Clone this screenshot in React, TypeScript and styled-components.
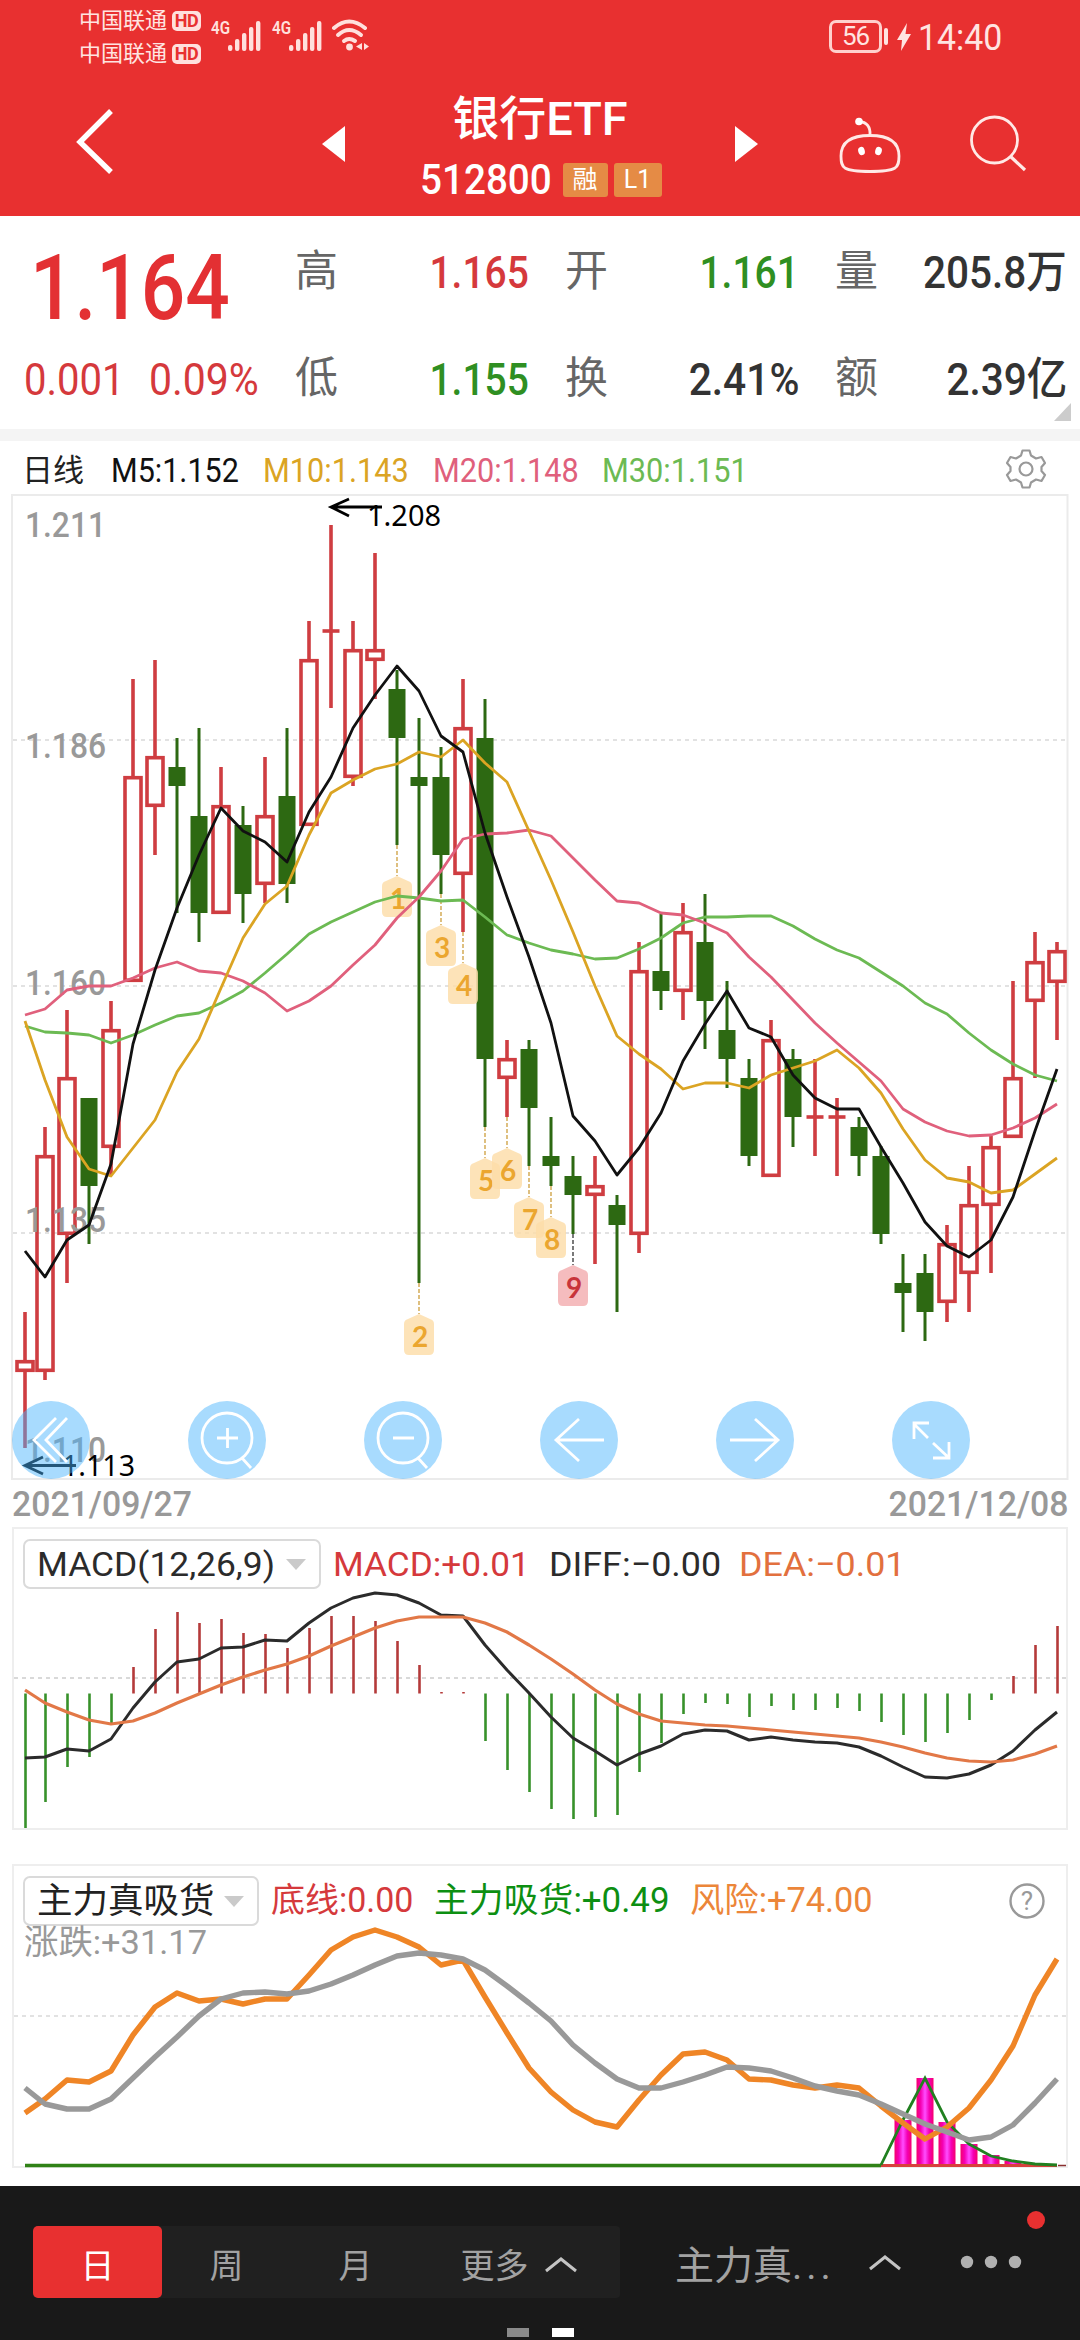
import React from "react";
import styled, { createGlobalStyle } from "styled-components";

const Global = createGlobalStyle`
  * { box-sizing: border-box; }
  body { margin: 0; background: #fff; }
`;

const FONT = `Roboto, "Noto Sans CJK SC", sans-serif`;
const RED = "#d5393c";
const GREEN = "#2f8f22";
const UP = "#cf3d41";
const DOWN = "#2d6912";

const Screen = styled.div`
  width: 1080px;
  height: 2340px;
  display: flex;
  flex-direction: column;
  font-family: ${FONT};
  background: #fff;
  overflow: hidden;
`;

/* ---------- text ---------- */

const Slot = styled.span<{ $w?: number; $right?: boolean }>`
  display: flex;
  flex: none;
  width: ${(p) => (p.$w ? `${p.$w}px` : "auto")};
  justify-content: ${(p) => (p.$right ? "flex-end" : "flex-start")};
  white-space: nowrap;
`;

const Glyphs = styled.span<{ $size: number; $color?: string; $weight?: number; $k?: number; $right?: boolean }>`
  display: block;
  font-size: ${(p) => p.$size}px;
  line-height: 1.2;
  font-weight: ${(p) => p.$weight ?? 400};
  color: ${(p) => p.$color ?? "inherit"};
  transform: scaleX(${(p) => p.$k ?? 1});
  transform-origin: ${(p) => (p.$right ? "right" : "left")} center;
`;

type TextProps = {
  size: number;
  color?: string;
  weight?: number;
  k?: number;
  w?: number;
  right?: boolean;
  children: React.ReactNode;
};

const Text = ({ size, color, weight, k, w, right, children }: TextProps) => (
  <Slot $w={w} $right={right}>
    <Glyphs $size={size} $color={color} $weight={weight} $k={k} $right={right}>
      {children}
    </Glyphs>
  </Slot>
);

/* ---------- header ---------- */

const Header = styled.header`
  height: 216px;
  flex: none;
  background: #e83030;
  color: #fff;
`;

const StatusBar = styled.div`
  height: 73px;
  padding: 4px 76px 0 79px;
  display: flex;
  justify-content: space-between;
  color: #ffe4e1;
`;

const StatusGroup = styled.div`
  display: flex;
  align-items: flex-start;
`;

const Carriers = styled.div`
  display: flex;
  flex-direction: column;
`;

const Carrier = styled.div`
  display: flex;
  align-items: center;
  height: 33px;
  gap: 5px;
  font-size: 22px;
  line-height: 33px;
`;

const HdBadge = styled.span`
  width: 29px;
  height: 20px;
  border-radius: 5px;
  background: #ffe0dd;
  color: #e83030;
  font-size: 18px;
  font-weight: 700;
  line-height: 20px;
  text-align: center;
  letter-spacing: -0.5px;
`;

const StatusIcons = styled.svg`
  margin: 10px 0 0 9px;
  width: 164px;
  height: 42px;
`;

const Battery = styled.div`
  width: 53px;
  height: 33px;
  margin-top: 16px;
  border: 3px solid #ffd0cc;
  border-radius: 7px;
  font-size: 26px;
  line-height: 27px;
  text-align: center;
  letter-spacing: -1px;
`;

const BatteryTail = styled.svg`
  width: 34px;
  height: 40px;
  margin: 12px 0 0 2px;
`;

const Clock = styled.div`
  margin-top: 13px;
  width: 86px;
`;

const TitleBar = styled.div`
  height: 143px;
  display: grid;
  grid-template-columns: 322px 436px 322px;
`;

const TitleSide = styled.div`
  display: flex;
  justify-content: space-between;
`;

const TitleIcon = styled.svg`
  width: 322px;
  height: 143px;
`;

const PageArrow = styled.svg`
  width: 24px;
  height: 143px;
`;

const TitleCenter = styled.div`
  display: flex;
  flex-direction: column;
  align-items: center;
  padding-top: 11px;
`;

const StockName = styled.div`
  font-size: 47px;
  line-height: 70px;
  font-weight: 500;
`;

const CodeRow = styled.div`
  display: flex;
  align-items: center;
  gap: 6px;
  height: 52px;
  margin-left: 1px;
`;

const Tag = styled.span<{ $w: number }>`
  width: ${(p) => p.$w}px;
  height: 34px;
  border-radius: 3px;
  background: #e58b45;
  font-size: 25px;
  line-height: 33px;
  text-align: center;
`;

/* ---------- quote ---------- */

const Quote = styled.section`
  flex: none;
  height: 225px;
  border-bottom: 12px solid #f4f4f4;
  display: grid;
  grid-template-columns: 270px 270px 270px 257px;
  position: relative;
`;

const PriceBox = styled.div`
  display: grid;
  grid-template-rows: 107px 106px;
`;

const PriceMain = styled.div`
  padding: 19px 0 0 30px;
`;

const PriceChange = styled.div`
  display: flex;
  padding: 30px 0 0 24px;
`;

const QuoteCol = styled.div`
  display: grid;
  grid-template-rows: 107px 106px;
`;

const QuoteCell = styled.div`
  display: flex;
  justify-content: space-between;
  padding: 30px 11px 0 25px;
`;

const LastCol = styled(QuoteCol)`
  ${QuoteCell} { padding-right: 0; }
`;

const Corner = styled.i`
  position: absolute;
  right: 9px;
  bottom: 8px;
  border-style: solid;
  border-width: 0 0 18px 17px;
  border-color: transparent transparent #ccc transparent;
`;

/* ---------- charts ---------- */

const Legend = styled.div`
  height: 53px;
  flex: none;
  display: flex;
  align-items: center;
  padding: 6px 33px 0 22px;
`;

const Gear = styled.svg`
  width: 42px;
  height: 42px;
  margin: -3px 0 0 auto;
`;

const ChartWrap = styled.section`
  position: relative;
  flex: none;
  height: 987px;
`;

const Plot = styled.svg<{ $w: number; $h: number }>`
  display: block;
  overflow: visible;
  width: ${(p) => p.$w}px;
  height: ${(p) => p.$h}px;
`;

const Tools = styled.div`
  position: absolute;
  left: 12px;
  bottom: 2px;
  display: flex;
  gap: 98px;
`;

const Tool = styled.button`
  width: 78px;
  height: 78px;
  padding: 0;
  border: 0;
  border-radius: 50%;
  background: rgba(74, 180, 253, 0.48);
  svg { display: block; width: 78px; height: 78px; }
`;

const Dates = styled.div`
  height: 46px;
  flex: none;
  display: flex;
  justify-content: space-between;
  padding: 3px 12px 0 12px;
`;

const Panel = styled.section<{ $h: number; $mt?: number }>`
  flex: none;
  height: ${(p) => p.$h}px;
  margin: ${(p) => p.$mt ?? 0}px 12px 0 12px;
  border: 2px solid #eee;
`;

const PanelHead = styled.div`
  height: 60px;
  display: flex;
  align-items: center;
  padding: 10px 20px 0 9px;
`;

const Select = styled.div<{ $w: number }>`
  width: ${(p) => p.$w}px;
  height: 50px;
  flex: none;
  margin-right: 12px;
  padding: 0 13px 0 12px;
  border: 2px solid #dadada;
  border-radius: 7px;
  display: flex;
  align-items: center;
  justify-content: space-between;
`;

const Caret = styled.i`
  border-style: solid;
  border-width: 11px 10px 0 10px;
  border-color: #cacaca transparent transparent transparent;
`;

const Help = styled.svg`
  width: 38px;
  height: 38px;
  margin-left: auto;
`;

/* ---------- bottom bar ---------- */

const Footer = styled.footer`
  margin-top: auto;
  height: 154px;
  flex: none;
  background: #191919;
  color: #a2a2a2;
  padding: 40px 0 0 33px;
  position: relative;
`;

const FooterRow = styled.div`
  display: flex;
  align-items: center;
  height: 72px;
`;

const Segments = styled.div`
  display: flex;
  width: 587px;
  height: 72px;
  background: #202020;
  border-radius: 4px;
  margin-right: 55px;
`;

const Segment = styled.div<{ $active?: boolean; $w?: number }>`
  width: ${(p) => p.$w ?? 129}px;
  display: flex;
  align-items: center;
  justify-content: center;
  gap: 15px;
  padding-top: 3px;
  border-radius: 5px;
  font-size: 34px;
  background: ${(p) => (p.$active ? "#e83030" : "transparent")};
  color: ${(p) => (p.$active ? "#fff" : "inherit")};
`;

const Picker = styled.div`
  width: 227px;
  display: flex;
  align-items: center;
  justify-content: space-between;
  font-size: 39px;
`;

const Ellipsis = styled.span`
  letter-spacing: 4px;
`;

const Chevron = styled.svg`
  width: 34px;
  height: 18px;
`;

const More = styled.svg`
  width: 64px;
  height: 16px;
  margin-left: 57px;
`;

const Unread = styled.i`
  position: absolute;
  left: 1027px;
  top: 25px;
  width: 18px;
  height: 18px;
  border-radius: 50%;
  background: #e83030;
`;

const Pages = styled.div`
  display: flex;
  gap: 23px;
  margin: 30px 0 0 474px;
`;

const Page = styled.i<{ $on?: boolean }>`
  width: 22px;
  height: 9px;
  background: ${(p) => (p.$on ? "#fff" : "#8a8a8a")};
`;

/* ---------- data ---------- */

const px = (i: number) => (i === 0 ? 25 : 23 + 22 * i);

type Candle = [number, number, number, number, "r" | "g"];

const candles: Candle[] = [
  [1312, 1360, 1372, 1448, "r"], [1127, 1155, 1372, 1380, "r"], [1010, 1077, 1235, 1283, "r"],
  [1098, 1098, 1186, 1244, "g"], [1001, 1029, 1148, 1175, "r"], [679, 776, 982, 982, "r"],
  [660, 756, 807, 855, "r"], [738, 767, 786, 913, "g"], [728, 816, 913, 942, "g"],
  [767, 805, 914, 914, "r"], [806, 825, 894, 923, "g"], [757, 815, 885, 903, "r"],
  [728, 796, 884, 903, "g"], [621, 659, 826, 826, "r"], [525, 631, 631, 708, "r"],
  [621, 649, 778, 786, "r"], [553, 649, 661, 699, "r"], [670, 689, 738, 845, "g"],
  [718, 777, 786, 1283, "g"], [747, 777, 855, 894, "g"], [679, 727, 875, 932, "r"],
  [699, 738, 1059, 1127, "g"], [1040, 1058, 1079, 1117, "r"], [1040, 1049, 1108, 1166, "g"],
  [1117, 1156, 1166, 1186, "g"], [1156, 1176, 1195, 1234, "g"], [1156, 1185, 1196, 1264, "r"],
  [1195, 1205, 1225, 1312, "g"], [942, 970, 1235, 1253, "r"], [914, 971, 991, 1010, "g"],
  [903, 931, 992, 1020, "r"], [894, 942, 1001, 1049, "g"], [981, 1030, 1059, 1088, "g"],
  [1059, 1078, 1156, 1166, "g"], [1020, 1039, 1177, 1177, "r"], [1049, 1059, 1117, 1147, "g"],
  [1059, 1117, 1117, 1156, "r"], [1098, 1117, 1117, 1176, "r"], [1117, 1127, 1156, 1176, "g"],
  [1146, 1156, 1234, 1244, "g"], [1254, 1283, 1293, 1332, "g"], [1254, 1273, 1312, 1341, "g"],
  [1225, 1243, 1303, 1322, "r"], [1166, 1204, 1274, 1312, "r"], [1136, 1146, 1206, 1273, "r"],
  [981, 1077, 1138, 1138, "r"], [932, 961, 1002, 1078, "r"], [942, 950, 983, 1040, "r"],
];

const m5 = [1251, 1277, 1240, 1225, 1164, 1044, 970, 908, 855, 808, 831, 842, 862, 812, 777, 728, 695, 666, 691, 736, 752, 833, 897, 957, 1023, 1116, 1141, 1175, 1148, 1113, 1061, 1024, 991, 1028, 1037, 1075, 1098, 1109, 1109, 1147, 1183, 1222, 1246, 1257, 1240, 1197, 1131, 1069];
const m10 = [1021, 1080, 1137, 1169, 1176, 1148, 1120, 1072, 1039, 988, 938, 904, 886, 835, 793, 780, 769, 764, 752, 757, 740, 763, 782, 831, 880, 932, 986, 1036, 1054, 1069, 1089, 1083, 1083, 1088, 1075, 1068, 1061, 1050, 1068, 1093, 1129, 1160, 1178, 1182, 1193, 1190, 1174, 1158];
const m20 = [1015, 1009, 990, 986, 986, 978, 968, 962, 971, 973, 981, 993, 1011, 1001, 986, 965, 945, 918, 897, 871, 839, 834, 833, 830, 836, 858, 880, 901, 903, 913, 915, 923, 933, 957, 977, 1000, 1023, 1043, 1062, 1081, 1109, 1122, 1131, 1136, 1135, 1128, 1118, 1104];
const m30 = [1026, 1032, 1033, 1035, 1043, 1035, 1025, 1016, 1013, 1003, 991, 973, 954, 934, 922, 912, 902, 896, 898, 901, 900, 917, 935, 943, 950, 954, 959, 958, 949, 938, 923, 917, 917, 916, 916, 926, 939, 950, 958, 972, 986, 1003, 1014, 1033, 1050, 1064, 1075, 1081];

const macd = [1828, 1802, 1767, 1757, 1723, 1667, 1629, 1612, 1623, 1619, 1633, 1634, 1648, 1628, 1616, 1616, 1621, 1641, 1665, 1692, 1692, 1741, 1770, 1792, 1809, 1819, 1817, 1815, 1772, 1743, 1714, 1703, 1704, 1717, 1706, 1710, 1710, 1708, 1711, 1722, 1735, 1742, 1733, 1720, 1700, 1676, 1645, 1626];
const diff = [1758, 1757, 1749, 1751, 1739, 1708, 1682, 1662, 1659, 1648, 1647, 1640, 1641, 1623, 1608, 1598, 1593, 1595, 1603, 1615, 1616, 1645, 1670, 1693, 1717, 1738, 1751, 1765, 1754, 1746, 1734, 1730, 1731, 1740, 1737, 1740, 1742, 1743, 1747, 1756, 1767, 1777, 1778, 1774, 1765, 1751, 1730, 1712];
const dea = [1690, 1703, 1712, 1720, 1724, 1721, 1713, 1703, 1694, 1685, 1677, 1670, 1664, 1656, 1646, 1637, 1628, 1621, 1617, 1617, 1617, 1623, 1632, 1645, 1659, 1674, 1690, 1704, 1714, 1721, 1723, 1725, 1726, 1728, 1730, 1732, 1734, 1736, 1738, 1742, 1747, 1753, 1758, 1761, 1762, 1760, 1754, 1746];

const risk = [2113, 2099, 2080, 2082, 2071, 2035, 2007, 1993, 2001, 1999, 2004, 1999, 1999, 1975, 1950, 1937, 1930, 1937, 1947, 1965, 1960, 1997, 2033, 2068, 2092, 2110, 2122, 2127, 2100, 2075, 2054, 2052, 2060, 2079, 2080, 2085, 2088, 2085, 2088, 2106, 2123, 2139, 2127, 2108, 2080, 2046, 1995, 1959];
const trend = [2088, 2104, 2109, 2109, 2099, 2078, 2057, 2037, 2016, 1999, 1993, 1992, 1994, 1991, 1984, 1975, 1965, 1956, 1953, 1955, 1959, 1970, 1986, 2003, 2021, 2045, 2063, 2079, 2088, 2088, 2082, 2075, 2067, 2068, 2071, 2078, 2086, 2091, 2095, 2104, 2114, 2124, 2132, 2140, 2137, 2125, 2103, 2079];
const inflow: [number, number][] = [[40, 2120], [41, 2078], [42, 2122], [43, 2144], [44, 2155], [45, 2161], [46, 2164]];

const marks: [number, number][] = [[1, 17], [2, 18], [3, 19], [4, 20], [5, 21], [6, 22], [7, 23], [8, 24], [9, 25]];

const points = (ys: number[]) => ys.map((y, i) => `${px(i)},${y}`).join(" ");

const Line = ({ ys, color, width = 2.8 }: { ys: number[]; color: string; width?: number }) => (
  <polyline points={points(ys)} fill="none" stroke={color} strokeWidth={width} strokeLinejoin="round" />
);

const CandleMark = ({ i, c }: { i: number; c: Candle }) => {
  const [high, top, bottom, low, kind] = c;
  const x = px(i);
  if (kind === "g") {
    return (
      <g fill={DOWN}>
        <rect x={x - 1.5} y={high} width={3} height={low - high} />
        <rect x={x - 8.5} y={top} width={17} height={bottom - top} />
      </g>
    );
  }
  return (
    <g stroke={UP} strokeWidth={3.6} fill="none">
      <path d={`M${x} ${high}V${top}M${x} ${bottom}V${low}`} />
      {top === bottom ? (
        <path d={`M${x - 8.5} ${top}H${x + 8.5}`} />
      ) : (
        <rect x={x - 8} y={top + 1.7} width={16} height={bottom - top - 3.4} />
      )}
    </g>
  );
};

const CountMark = ({ n, i }: { n: number; i: number }) => {
  const x = px(i);
  const low = candles[i][3];
  const y = low + 31;
  const last = n === 9;
  return (
    <g>
      <path d={`M${x} ${low}V${y}`} stroke={last ? "#222" : "#c9962c"} strokeWidth={1.2} strokeDasharray="4 2" />
      <path
        d={`M${x - 11} ${y + 5}L${x} ${y}L${x + 11} ${y + 5}Q${x + 15} ${y + 6} ${x + 15} ${y + 10}V${y + 36}Q${x + 15} ${y + 41} ${x + 10} ${y + 41}H${x - 10}Q${x - 15} ${y + 41} ${x - 15} ${y + 36}V${y + 10}Q${x - 15} ${y + 6} ${x - 11} ${y + 5}Z`}
        fill={last ? "#f3adb0" : "#fcdda8"}
        fillOpacity={0.82}
      />
      <text x={x + 1} y={y + 33} textAnchor="middle" fontSize={28} fontWeight={700} fontFamily="Lato, sans-serif" fill={last ? "#c8343a" : "#eba62f"}>
        {n}
      </text>
    </g>
  );
};

const priceLabels: [string, number][] = [["1.211", 537], ["1.186", 758], ["1.160", 995], ["1.135", 1232], ["1.110", 1462]];

const PriceChart = () => (
  <Plot viewBox="0 494 1080 987" $w={1080} $h={987}>
    <rect x={12} y={495} width={1055.5} height={984} fill="none" stroke="#ebebeb" strokeWidth={2} />
    {[740, 986, 1233].map((y) => (
      <path key={y} d={`M13 ${y}H1066`} stroke="#d9d9d9" strokeWidth={1.6} strokeDasharray="4 4" />
    ))}
    {candles.map((c, i) => <CandleMark key={i} i={i} c={c} />)}
    {marks.map(([n, i]) => <CountMark key={n} n={n} i={i} />)}
    {priceLabels.map(([t, y]) => (
      <text key={t} x={25} y={y} fontFamily={FONT} fontSize={35} fontWeight={500} fill="#999" textLength={81} lengthAdjust="spacingAndGlyphs">{t}</text>
    ))}
    <Line ys={m30} color="#6cba53" />
    <Line ys={m20} color="#e0607c" />
    <Line ys={m10} color="#dba423" />
    <Line ys={m5} color="#111" />
    <g stroke="#000" strokeWidth={2.8} fill="none">
      <path d="M382 507H332M349 499L331 507L349 516" />
      <path d="M76 1465.500H26M43 1457L25 1465.500L43 1474" />
    </g>
    <g fontFamily='"Noto Sans", sans-serif' fontSize={29} fill="#000">
      <text x={367} y={526} textLength={74} lengthAdjust="spacingAndGlyphs">1.208</text>
      <text x={62} y={1476} textLength={73} lengthAdjust="spacingAndGlyphs">1.113</text>
    </g>
  </Plot>
);

const tools = [
  "M44 17L22 39L44 61M55 17L34 39L55 61",
  "M64 37A25 25 0 1 0 14 37A25 25 0 1 0 64 37M54 57L63 67M29 37H50M39.500 27V47",
  "M64 37A25 25 0 1 0 14 37A25 25 0 1 0 64 37M54 57L63 67M29 37H50",
  "M64 39H16M39 18L16 39L39 60",
  "M14 39H62M39 18L62 39L39 60",
  "M36 37L22 23M22 38V22H37M41 42L56 56M57 41V57H41",
];

const MacdChart = () => (
  <Plot viewBox="14 1589 1052 239" $w={1052} $h={239}>
    <path d="M14 1678H1066" stroke="#d9d9d9" strokeWidth={1.8} strokeDasharray="4 4" />
    {macd.map((y, i) => (
      <path key={i} d={`M${px(i) + 0.5} 1693.500V${y}`} stroke={y < 1693.5 ? "#b43a3a" : "#37912a"} strokeWidth={2.6} />
    ))}
    <Line ys={diff} color="#2b2b2b" width={3} />
    <Line ys={dea} color="#e27847" width={3.2} />
  </Plot>
);

const FlowChart = () => (
  <Plot viewBox="14 1926 1052 240" $w={1052} $h={240}>
    <defs>
      <linearGradient id="flow">
        <stop offset="0" stopColor="#f5006e" />
        <stop offset="0.25" stopColor="#f500b4" />
        <stop offset="0.5" stopColor="#ff4dff" />
        <stop offset="0.75" stopColor="#f500b4" />
        <stop offset="1" stopColor="#f5006e" />
      </linearGradient>
    </defs>
    <text x={24} y={1954} fontFamily={FONT} fontSize={34} fill="#999" textLength={183} lengthAdjust="spacingAndGlyphs">涨跌:+31.17</text>
    <path d="M14 2016H1066" stroke="#d9d9d9" strokeWidth={1.6} strokeDasharray="4 4" />
    {inflow.map(([i, y]) => (
      <rect key={i} x={px(i) - 8.5} y={y} width={17} height={2165 - y} fill="url(#flow)" />
    ))}
    <path d="M881 2165.500H1057" stroke="#d8403c" strokeWidth={3} />
    <path d="M1058 2165.500H1066" stroke="#8a3030" strokeWidth={1.5} />
    <path d="M25 2165.500H881" stroke="#2f8216" strokeWidth={3.6} />
    <path d="M881 2165L903 2120L925 2078L947 2122L969 2144L991 2156L1013 2161L1035 2164L1057 2165" fill="none" stroke="#218020" strokeWidth={2.8} />
    <Line ys={risk} color="#ef8526" width={5.4} />
    <Line ys={trend} color="#999" width={5.4} />
  </Plot>
);

const Signal = ({ x }: { x: number }) => (
  <g fill="#ffe0dd">
    {[0, 1, 2, 3, 4].map((b) => {
      const h = [6, 12, 18, 24, 30][b];
      return <rect key={b} x={x + b * 7} y={37 - h} width={4.4} height={h} rx={2} />;
    })}
  </g>
);

const UpChevron = () => (
  <Chevron viewBox="0 0 34 18">
    <path d="M2 16L17 4L32 16" fill="none" stroke="#c4c4c4" strokeWidth={3} />
  </Chevron>
);

export default function App() {
  return (
    <Screen>
      <Global />
      <Header>
        <StatusBar>
          <StatusGroup>
            <Carriers>
              <Carrier>中国联通<HdBadge>HD</HdBadge></Carrier>
              <Carrier>中国联通<HdBadge>HD</HdBadge></Carrier>
            </Carriers>
            <StatusIcons viewBox="0 0 164 42">
              <g fontFamily={FONT} fontSize={19} fontWeight={600} fill="#ffe0dd">
                <text x={1} y={20} textLength={19} lengthAdjust="spacingAndGlyphs">4G</text>
                <text x={62} y={20} textLength={19} lengthAdjust="spacingAndGlyphs">4G</text>
              </g>
              <Signal x={18} />
              <Signal x={79} />
              <g fill="none" stroke="#ffe0dd" strokeWidth={4} strokeLinecap="round">
                <path d="M124 14Q139 1 155 14" />
                <path d="M128 21Q139 11 151 21" />
                <path d="M134 27Q139 23 145 27" />
              </g>
              <circle cx={139.5} cy={33} r={3.4} fill="#ffe0dd" />
              <path d="M152 29V36L146 32.500ZM154 29L159 32.500L154 36Z" fill="#ffe0dd" />
            </StatusIcons>
          </StatusGroup>
          <StatusGroup>
            <Battery>56</Battery>
            <BatteryTail viewBox="0 0 34 40">
              <rect x={0} y={12} width={4} height={17} rx={2} fill="#ffe4e1" />
              <path d="M23 7L13 24H18L17 35L27 18H21.500Z" fill="#ffe4e1" />
            </BatteryTail>
            <Clock><Text size={36} k={0.94}>14:40</Text></Clock>
          </StatusGroup>
        </StatusBar>
        <TitleBar>
          <TitleSide>
            <TitleIcon viewBox="0 73 322 143">
              <path d="M111 111L80 142L111 172" fill="none" stroke="#fff" strokeWidth={5.4} />
            </TitleIcon>
          </TitleSide>
          <TitleSide>
            <PageArrow viewBox="0 0 24 143">
              <path d="M0 71L23 53V89Z" fill="#fff" />
            </PageArrow>
            <TitleCenter>
              <StockName>银行ETF</StockName>
              <CodeRow>
                <Text size={42} weight={500} k={0.92} w={137}>512800</Text>
                <Tag $w={45}>融</Tag>
                <Tag $w={48}>L1</Tag>
              </CodeRow>
            </TitleCenter>
            <PageArrow viewBox="0 0 24 143">
              <path d="M24 71L1 53V89Z" fill="#fff" />
            </PageArrow>
          </TitleSide>
          <TitleIcon viewBox="758 73 322 143">
            <g fill="none" stroke="#ffe9e6" strokeWidth={2.8}>
              <path d="M870 140.500C889 140.500 899 147 899 161C899 173 897 176.500 870 176.500C843 176.500 841 173 841 161C841 147 851 140.500 870 140.500Z" transform="translate(0 -5)" />
              <path d="M859 121.500C867 122 870.500 127 870 135" />
              <circle cx={994.5} cy={140} r={23} />
              <path d="M1010 156L1025 170" strokeWidth={3.2} />
            </g>
            <g fill="#fff">
              <circle cx={859} cy={121.5} r={3.8} />
              <ellipse cx={861.5} cy={151} rx={3.3} ry={4.2} transform="rotate(-15 861.500 151)" />
              <ellipse cx={878.5} cy={151} rx={3.3} ry={4.2} transform="rotate(15 878.500 151)" />
            </g>
          </TitleIcon>
        </TitleBar>
      </Header>

      <Quote>
        <PriceBox>
          <PriceMain><Text size={90} weight={500} color="#e33033" k={0.87}>1.164</Text></PriceMain>
          <PriceChange>
            <Text size={45} color={RED} k={0.89} w={125}>0.001</Text>
            <Text size={45} color={RED} k={0.91}>0.09%</Text>
          </PriceChange>
        </PriceBox>
        <QuoteCol>
          <QuoteCell><Text size={43} color="#666">高</Text><Text size={45} weight={500} color={RED} k={0.865} right>1.165</Text></QuoteCell>
          <QuoteCell><Text size={43} color="#666">低</Text><Text size={45} weight={500} color={GREEN} k={0.865} right>1.155</Text></QuoteCell>
        </QuoteCol>
        <QuoteCol>
          <QuoteCell><Text size={43} color="#666">开</Text><Text size={45} weight={500} color={GREEN} k={0.865} right>1.161</Text></QuoteCell>
          <QuoteCell><Text size={43} color="#666">换</Text><Text size={45} weight={500} color="#333" k={0.905} right>2.41%</Text></QuoteCell>
        </QuoteCol>
        <LastCol>
          <QuoteCell><Text size={43} color="#666">量</Text><Text size={45} weight={500} color="#333" k={0.9} right>205.8万</Text></QuoteCell>
          <QuoteCell><Text size={43} color="#666">额</Text><Text size={45} weight={500} color="#333" k={0.9} right>2.39亿</Text></QuoteCell>
        </LastCol>
        <Corner />
      </Quote>

      <Legend>
        <Text size={31} color="#222" w={89}>日线</Text>
        <Text size={33} color="#111" k={0.925} w={152}>M5:1.152</Text>
        <Text size={33} color="#dba423" k={0.93} w={170}>M10:1.143</Text>
        <Text size={33} color="#e0607c" k={0.93} w={169}>M20:1.148</Text>
        <Text size={33} color="#6cba53" k={0.93}>M30:1.151</Text>
        <Gear viewBox="0 0 42 42" fill="none" stroke="#999" strokeWidth={2.2} strokeLinejoin="round">
          <path d="M17.500 2.500H24.500L26 7.500L31 10.500L36.500 9L40 15L36.500 19V23L40 27L36.500 33L31 31.500L26 34.500L24.500 39.500H17.500L16 34.500L11 31.500L5.500 33L2 27L5.500 23V19L2 15L5.500 9L11 10.500L16 7.500Z" />
          <circle cx={21} cy={21} r={6.5} />
        </Gear>
      </Legend>

      <ChartWrap>
        <PriceChart />
        <Tools>
          {tools.map((d, i) => (
            <Tool key={i}>
              <svg viewBox="0 0 78 78" fill="none" stroke="#fff" strokeWidth={2.8}><path d={d} /></svg>
            </Tool>
          ))}
        </Tools>
      </ChartWrap>

      <Dates>
        <Text size={35} weight={500} color="#999" k={0.965}>2021/09/27</Text>
        <Text size={35} weight={500} color="#999" k={0.965} right>2021/12/08</Text>
      </Dates>

      <Panel $h={303}>
        <PanelHead>
          <Select $w={298}>
            <Text size={34} color="#2b2b2b" k={1.04} w={240}>MACD(12,26,9)</Text>
            <Caret />
          </Select>
          <Text size={34} color={RED} k={1.035} w={216}>MACD:+0.01</Text>
          <Text size={34} color="#2b2b2b" k={1.055} w={190}>DIFF:−0.00</Text>
          <Text size={34} color="#e2703e" k={1.055}>DEA:−0.01</Text>
        </PanelHead>
        <MacdChart />
      </Panel>

      <Panel $h={304} $mt={34}>
        <PanelHead>
          <Select $w={236}>
            <Text size={35.5} color="#222" w={178}>主力真吸货</Text>
            <Caret />
          </Select>
          <Text size={34.5} color={RED} k={0.985} w={163}>底线:0.00</Text>
          <Text size={34.5} color="#0d8f12" k={1.01} w={256}>主力吸货:+0.49</Text>
          <Text size={34.5} color="#ec8639" k={0.995}>风险:+74.00</Text>
          <Help viewBox="0 0 38 38">
            <circle cx={19} cy={19} r={16.5} fill="none" stroke="#999" strokeWidth={2.4} />
            <text x={19} y={28} textAnchor="middle" fontFamily={FONT} fontSize={26} fill="#999">?</text>
          </Help>
        </PanelHead>
        <FlowChart />
      </Panel>

      <Footer>
        <FooterRow>
          <Segments>
            <Segment $active>日</Segment>
            <Segment>周</Segment>
            <Segment>月</Segment>
            <Segment $w={198}>
              更多
              <UpChevron />
            </Segment>
          </Segments>
          <Picker>
            <span>主力真<Ellipsis>...</Ellipsis></span>
            <UpChevron />
          </Picker>
          <More viewBox="0 0 64 16" fill="#b0b0b0">
            <circle cx={8} cy={8} r={6.2} /><circle cx={32} cy={8} r={6.2} /><circle cx={56} cy={8} r={6.2} />
          </More>
        </FooterRow>
        <Unread />
        <Pages><Page /><Page $on /></Pages>
      </Footer>
    </Screen>
  );
}
